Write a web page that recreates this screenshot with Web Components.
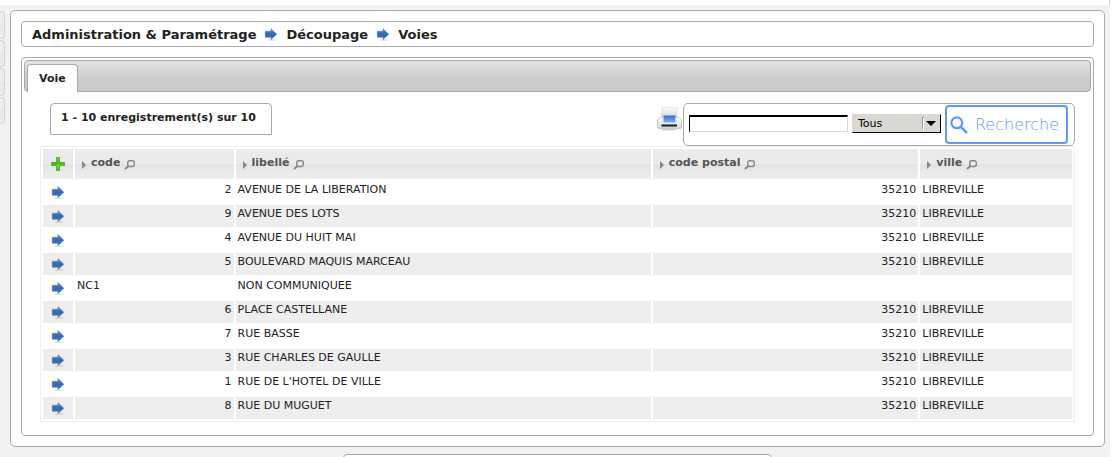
<!DOCTYPE html>
<html lang="fr">
<head>
<meta charset="utf-8">
<title>Voies</title>
<style>
html, body { height: 100%; }
body { margin: 0; overflow: hidden; background: #fff; color: #222; font: 11px/14px "DejaVu Sans", sans-serif; }
</style>
</head>
<body>
<app-shell>
  <side-menu slot="side"></side-menu>
  <crumb-trail>
    <a href="#admin">Administration &amp; Paramétrage</a>
    <arrow-icon></arrow-icon>
    <a href="#decoupage">Découpage</a>
    <arrow-icon></arrow-icon>
    <a href="#voies">Voies</a>
  </crumb-trail>
  <tab-panel>
    <span slot="tab">Voie</span>
    <list-toolbar><span>1 - 10 enregistrement(s) sur 10</span></list-toolbar>
    <street-table></street-table>
  </tab-panel>
  <footer-box slot="footer"></footer-box>
</app-shell>
<script>
function define(name, html, setup) {
  customElements.define(name, class extends HTMLElement {
    constructor() {
      super();
      const t = document.createElement('template');
      t.innerHTML = html;
      this.attachShadow({ mode: 'open' }).append(t.content.cloneNode(true));
      if (setup) setup(this.shadowRoot);
    }
  });
}

define('arrow-icon', `
<style>
:host { display: inline-block; width: 14px; height: 14px; }
svg { display: block; }
</style>
<svg width="14" height="14" viewBox="0 0 14 14" aria-hidden="true">
  <defs><linearGradient id="g" x1="0" y1="0" x2="0" y2="1"><stop offset="0" stop-color="#6691c8"/><stop offset=".5" stop-color="#3568a9"/><stop offset="1" stop-color="#4a7dbd"/></linearGradient></defs>
  <ellipse cx="8" cy="13" rx="4.500" ry="1" fill="#000" opacity=".1"/>
  <path d="M1.300 4.300H7V1.700L12.800 7.300 7 12.500V10.300H1.300z" fill="url(#g)" stroke="#4a7ab6" stroke-width=".6"/>
</svg>`);

define('app-shell', `
<style>
:host { display: flex; flex-direction: column; height: 100vh; box-sizing: border-box; padding-right: 5px; }
header { flex: none; height: 5px; border-right: 1px solid #c9c6d2; box-sizing: border-box; }
.body { flex: 1; background: #f2f2f2; display: grid; grid-template-columns: 5px minmax(0, 1fr); column-gap: 5px; grid-template-rows: auto 1fr; padding: 5px 5px 0 0; }
main { background: #fff; border: 1px solid #aaa; border-radius: 5px; padding: 10px; }
footer { grid-column: 1 / -1; padding-top: 7px; display: flex; justify-content: center; margin-right: -10px; }
</style>
<header></header>
<div class="body">
  <slot name="side"></slot>
  <main><slot></slot></main>
  <footer><slot name="footer"></slot></footer>
</div>`);

define('side-menu', `
<style>
:host { display: flex; flex-direction: column; gap: 1px; padding-top: 1px; }
i { height: 27px; box-sizing: border-box; border: 1px solid #d3d3d3; border-left: 0; border-radius: 0 4px 4px 0; background: linear-gradient(#ededed 50%, #e6e6e6 50%, #eee); }
i:nth-child(even) { height: 28px; }
</style>
<i></i><i></i><i></i><i></i>`);

define('crumb-trail', `
<style>
:host { display: flex; align-items: center; gap: 8px; height: 24px; padding: 0 10px; border: 1px solid #aaa; border-radius: 4px; font-size: 13px; line-height: 16px; font-weight: bold; }
::slotted(a) { color: inherit; text-decoration: none; padding-top: 1px; }
</style>
<slot></slot>`);

define('tab-panel', `
<style>
:host { display: block; margin-top: 10px; padding: 2px; border: 1px solid #aaa; border-radius: 4px; }
nav { display: flex; align-items: flex-end; height: 30px; padding-left: 2px; border: 1px solid #aaa; border-radius: 4px; background: linear-gradient(#e3e3e3, #cbcbcb 65%, #cbcbcb); }
button { font: bold 11px/14px "DejaVu Sans", sans-serif; color: #222; height: 28px; margin: 0 0 -1px; padding: 0 11px; border: 1px solid #aaa; border-bottom: 0; border-radius: 4px 4px 0 0; background: #fff; }
.content { padding: 11px 16px; }
</style>
<nav><button type="button"><slot name="tab"></slot></button></nav>
<div class="content"><slot></slot></div>`);

define('list-toolbar', `
<style>
:host { display: flex; align-items: flex-start; padding-left: 10px; }
.count { box-sizing: border-box; height: 32px; padding: 7px 15px 0 10px; border: 1px solid #aaa; border-radius: 4px 4px 0 0; font-weight: bold; }
.print { margin: 4px 1px 0 auto; display: block; }
.print svg { display: block; }
form { display: flex; align-items: center; box-sizing: border-box; height: 43px; padding: 0 6px 0 5px; border: 1px solid #aaa; border-radius: 5px; }
input { box-sizing: border-box; width: 159px; height: 17px; margin: 0 4px 2px 0; padding: 0 2px; border: 1px solid #d9d8d1; border-top: 2px solid #000; border-left: 1px solid #000; background: #fff; font: 11px "DejaVu Sans", sans-serif; outline: 0; }
.pick { display: grid; width: 89px; margin: 0 4px 2px 0; }
select { appearance: none; grid-area: 1 / 1; box-sizing: border-box; height: 19px; margin: 0; padding: 0 20px 0 5px; border: 1px solid #d9d8d1; border-right: 1px solid #000; border-bottom: 1px solid #000; border-radius: 0; background: #d9d8d1; color: #000; font: 11px/14px "DejaVu Sans", sans-serif; }
.pick svg { grid-area: 1 / 1; justify-self: end; align-self: center; pointer-events: none; }
form button { display: flex; align-items: center; gap: 7px; box-sizing: border-box; height: 39px; padding: 0 7px 0 3px; border: 2px solid #5f9cf1; border-radius: 4px; background: #fff; color: #5f9cf1; font: 200 16px/20px "DejaVu Sans", sans-serif; }
</style>
<div class="count"><slot></slot></div>
<a class="print" href="#print" aria-label="Imprimer"><svg width="25" height="25" viewBox="0 0 25 25">
  <defs>
    <linearGradient id="p" x1="0" y1="0" x2="0" y2="1"><stop offset="0" stop-color="#fafafa"/><stop offset="1" stop-color="#d0d1d5"/></linearGradient>
    <linearGradient id="b" x1="0" y1="0" x2="0" y2="1"><stop offset="0" stop-color="#3a6dc8"/><stop offset="1" stop-color="#7db4f2"/></linearGradient>
    <linearGradient id="w" x1="0" y1="0" x2="0" y2="1"><stop offset="0" stop-color="#fff"/><stop offset="1" stop-color="#d8d9dd"/></linearGradient>
  </defs>
  <path d="M5 .500h15V12H4z" fill="url(#p)" stroke="#d6d6da" stroke-width=".6"/>
  <path d="M.500 13l3-3h18l3 3v7q0 1.500-2 1.500H2.500q-2 0-2-1.500z" fill="url(#w)" stroke="#b9bac0" stroke-width=".8"/>
  <path d="M6.500 8.500h12v7h-12z" fill="url(#b)"/>
  <path d="M4.500 17.500h15.500v2H4.500z" fill="#1d1d20"/>
  <path d="M4.500 20h15.500l-1 3.500H5.500z" fill="#cfd0d4"/>
</svg></a>
<form onsubmit="return false">
  <input type="text" aria-label="Texte recherché">
  <div class="pick">
    <select aria-label="Champ de recherche"><option>Tous</option><option>code</option><option>libellé</option></select>
    <svg width="20" height="15" viewBox="0 0 20 15"><path d="M1.500 1v12M1 1.500h2" stroke="#999" fill="none"/><path d="M2.500 2v12" stroke="#fff"/><path d="M5 5h10l-5 5z" fill="#000"/></svg>
  </div>
  <button type="submit"><svg width="18" height="18" viewBox="0 0 18 18" aria-hidden="true"><circle cx="6.800" cy="6.800" r="5.400" fill="none" stroke="#5f9cf1" stroke-width="2.200"/><path d="M10.600 10.600L17 17" stroke="#5f9cf1" stroke-width="2.600"/></svg><span>Recherche</span></button>
</form>`);

const rows = [
  ['2', 'AVENUE DE LA LIBERATION'], ['9', 'AVENUE DES LOTS'], ['4', 'AVENUE DU HUIT MAI'],
  ['5', 'BOULEVARD MAQUIS MARCEAU'], ['NC1', 'NON COMMUNIQUEE', '', ''], ['6', 'PLACE CASTELLANE'],
  ['7', 'RUE BASSE'], ['3', 'RUE CHARLES DE GAULLE'], ['1', "RUE DE L'HOTEL DE VILLE"], ['8', 'RUE DU MUGUET']
];

define('street-table', `
<style>
:host { display: block; }
table { width: 100%; table-layout: fixed; border-collapse: separate; border-spacing: 2px; border: 1px solid #eee; }
.c-act { width: 30px; } .c-code { width: 16%; } .c-lib { width: 41.9%; } .c-cp { width: 26.8%; } .c-ville { width: 15.3%; }
th { height: 30px; padding: 0; text-align: left; vertical-align: top; color: #555; background: linear-gradient(#ebebeb 0 50%, #e3e3e3 50%, #efefef); }
th span { display: flex; align-items: center; padding: 6px 0 0 6px; }
th svg { flex: none; display: block; }
span svg:first-child { margin-top: 2px; }
span svg:last-child { margin: 2px 0 0 2px; }
.add { display: block; margin: 7px 7px 0; height: 16px; }
td { height: 22px; padding: 2px 2px 0; box-sizing: border-box; vertical-align: top; white-space: nowrap; }
tr:nth-child(even) td { background: #eee; }
.num { text-align: right; }
td:first-child { padding: 4px 8px 0; line-height: 0; }
td a { display: block; height: 14px; }
</style>
<table>
  <colgroup><col class="c-act"><col class="c-code"><col class="c-lib"><col class="c-cp"><col class="c-ville"></colgroup>
  <thead><tr><th><a class="add" href="#add" aria-label="Ajouter"><svg width="16" height="16" viewBox="0 0 16 16">
    <defs><linearGradient id="a" x1="0" y1="0" x2="0" y2="1"><stop offset="0" stop-color="#7ccb4e"/><stop offset=".5" stop-color="#41b51a"/><stop offset=".6" stop-color="#7ae01a"/><stop offset="1" stop-color="#4fc21a"/></linearGradient></defs>
    <path d="M6.500 1.500h3v5h5v3h-5v5h-3v-5h-5v-3h5z" fill="url(#a)" stroke="#52b32b"/></svg></a></th></tr></thead>
  <tbody></tbody>
</table>`, root => {
  const head = root.querySelector('thead tr');
  for (const label of ['code', 'libellé', 'code postal', 'ville']) {
    const th = document.createElement('th');
    th.innerHTML = `<span><svg width="10" height="12" viewBox="0 0 10 12"><path d="M1 3l4 4-4 4z" fill="#888"/></svg>${label}<svg width="14" height="14" viewBox="0 0 14 14"><rect x="5.700" y="3.700" width="6.600" height="5.800" rx="2" fill="none" stroke="#888" stroke-width="1.400"/><path d="M6.500 9L3 12" stroke="#888" stroke-width="2"/></svg></span>`;
    head.append(th);
  }
  root.querySelector('tbody').innerHTML = rows.map(([code, name, cp = '35210', city = 'LIBREVILLE']) =>
    `<tr><td><a href="#voie-${code}" aria-label="Ouvrir ${name}"><arrow-icon></arrow-icon></a></td><td${isNaN(code) ? '' : ' class="num"'}>${code}</td><td>${name}</td><td class="num">${cp}</td><td>${city}</td></tr>`).join('');
});

define('footer-box', `
<style>
:host { display: block; box-sizing: border-box; width: 38.4%; height: 20px; border: 1px solid #aaa; border-radius: 4px; background: #fff; margin-bottom: -20px; }
</style>`);
</script>
</body>
</html>
